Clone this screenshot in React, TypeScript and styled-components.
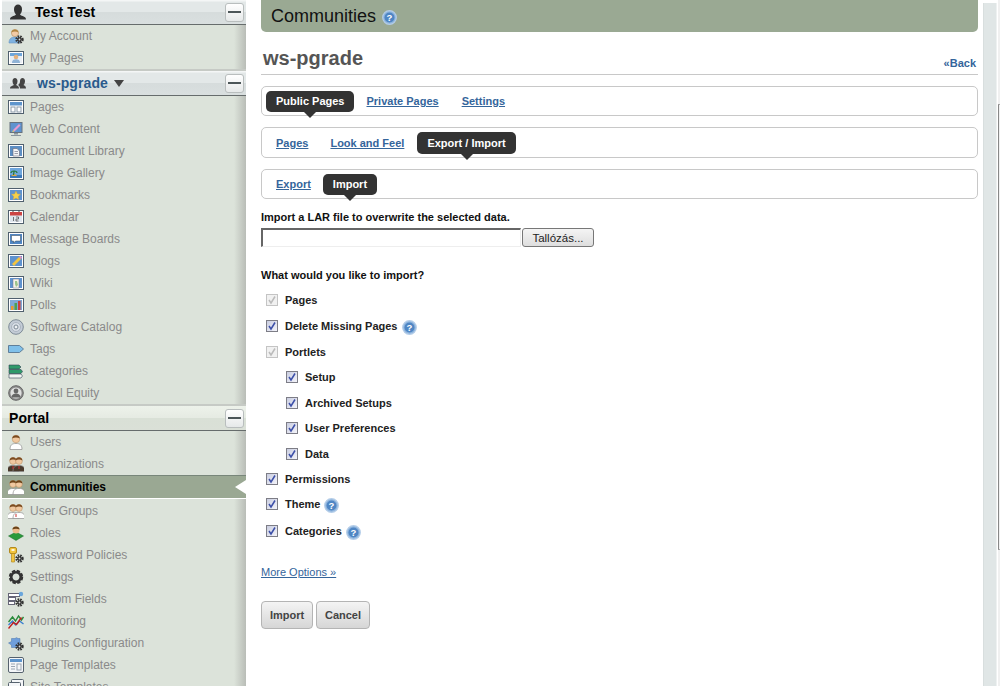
import React from 'react';
import styled, { createGlobalStyle } from 'styled-components';

const Global = createGlobalStyle`
  html, body { margin: 0; padding: 0; background: #fff; height: 686px; overflow: hidden; }
  body { font-family: "Liberation Sans", Arial, sans-serif; }
`;

const Page = styled.div`
  display: flex;
  width: 1000px;
  height: 686px;
  overflow: hidden;
  background: #fff;
`;
const Sidebar = styled.nav`
  width: 244px;
  margin-left: 2px;
  flex: none;
`;
const Section = styled.section`
  border-bottom: 2px solid #c6cac5;
  &:last-child { border-bottom: 0; }
`;
const Header = styled.header<{ $portal?: boolean }>`
  display: flex;
  align-items: center;
  height: 24px;
  border-bottom: 1px solid #666c6c;
  padding-left: 7px;
  background: ${p =>
    p.$portal
      ? 'linear-gradient(#edf2ea 0, #e6ebe3 48%, #d9e0d6 52%, #dae0d7 100%)'
      : 'linear-gradient(#f4f6f6 0, #f4f6f6 1px, #e3e8e8 2px, #e3e8e8 48%, #d6dcdc 52%, #d9dfdf 100%)'};
`;
const HeaderIcon = styled.span`
  display: flex;
  width: 18px;
  height: 16px;
  flex: none;
  margin-right: 8px;
  svg { display: block; }
`;
const HeaderTitle = styled.span<{ $link?: boolean }>`
  font-size: 14px;
  font-weight: bold;
  color: ${p => (p.$link ? '#2a5a8c' : '#000')};
  letter-spacing: 0.1px;
  margin-left: ${p => (p.$link ? '2px' : '0')};
`;
const Caret = styled.span`
  width: 0;
  height: 0;
  margin-left: 6px;
  border-left: 5px solid transparent;
  border-right: 5px solid transparent;
  border-top: 7px solid #444;
`;
const Collapse = styled.span`
  margin-left: auto;
  margin-right: 2px;
  width: 17px;
  height: 17px;
  border: 1px solid #b9bebe;
  border-radius: 3px;
  background: linear-gradient(#fff, #e6e9e9);
  display: flex;
  align-items: center;
  justify-content: center;
  &::before { content: ''; width: 13px; height: 2px; background: #4c5658; }
`;
const List = styled.ul`
  list-style: none;
  margin: 0;
  padding: 0;
  background: linear-gradient(to right, #dce3da 0, #dce3da 232px, #b9bdb7 244px);
`;
const Item = styled.li<{ $active?: boolean }>`
  position: relative;
  display: flex;
  align-items: center;
  height: 22px;
  padding-left: 6px;
  font-size: 12px;
  color: ${p => (p.$active ? '#000' : '#8a8a8a')};
  font-weight: ${p => (p.$active ? 'bold' : 'normal')};
  ${p =>
    p.$active
      ? `
    background: #9aa893;
    border-top: 1px solid #78867a;
    border-bottom: 1px solid #fff;
    margin-bottom: 1px;
    &::after {
      content: '';
      position: absolute;
      right: 0;
      top: 4px;
      border-top: 7px solid transparent;
      border-bottom: 7px solid transparent;
      border-right: 11px solid #fff;
    }
  `
      : ''}
`;
const ItemIcon = styled.span`
  display: flex;
  width: 16px;
  height: 16px;
  flex: none;
  margin-right: 6px;
  svg { display: block; }
`;
const Main = styled.main`
  width: 717px;
  flex: none;
  margin-left: 15px;
`;
const TitleBar = styled.div`
  display: flex;
  align-items: center;
  height: 32px;
  padding: 0 0 0 10px;
  background: #9aa993;
  border-radius: 0 0 5px 5px;
  font-size: 18px;
  color: #111;
  svg { margin-left: 6px; margin-top: 2px; }
`;
const Heading = styled.div`
  display: flex;
  justify-content: space-between;
  align-items: flex-end;
  height: 42px;
  border-bottom: 1px solid #c8c8c8;
  padding: 0 2px;
`;
const Name = styled.h1`
  margin: 0 0 4px;
  font-size: 20px;
  font-weight: bold;
  line-height: 24px;
  color: #555;
`;
const Back = styled.a`
  font-size: 11px;
  font-weight: bold;
  color: #34659b;
  margin-bottom: 4px;
  line-height: 13px;
`;
const TabBox = styled.div<{ $h: number; $top: number }>`
  display: flex;
  align-items: flex-start;
  height: ${p => p.$h}px;
  line-height: ${p => p.$h - 9}px;
  margin-top: ${p => p.$top}px;
  border: 1px solid #c8c8c8;
  border-radius: 5px;
  padding: 4px 0 0 4px;
  box-sizing: border-box;
`;
const Tab = styled.a<{ $left: number }>`
  margin-left: ${p => p.$left}px;
  font-size: 11px;
  font-weight: bold;
  color: #34659b;
  text-decoration: underline;
  white-space: nowrap;
`;
const ActiveTab = styled.span<{ $left: number }>`
  position: relative;
  margin-left: ${p => p.$left}px;
  padding: 0 10px;
  border-radius: 5px;
  background: #333;
  color: #fff;
  font-size: 11px;
  font-weight: bold;
  white-space: nowrap;
  &::after {
    content: '';
    position: absolute;
    left: 50%;
    margin-left: -6px;
    top: 100%;
    border-left: 6px solid transparent;
    border-right: 6px solid transparent;
    border-top: 6px solid #333;
  }
`;
const Caption = styled.div<{ $top: number }>`
  margin-top: ${p => p.$top}px;
  font-size: 11px;
  font-weight: bold;
  line-height: 13px;
  color: #111;
`;
const FileRow = styled.div`
  display: flex;
  margin-top: 4px;
  height: 19px;
`;
const FileField = styled.div`
  width: 260px;
  height: 19px;
  box-sizing: border-box;
  border-top: 2px solid #666;
  border-left: 2px solid #666;
  border-right: 1px solid #eee;
  border-bottom: 1px solid #eee;
`;
const Browse = styled.button`
  width: 72px;
  height: 19px;
  margin-left: 1px;
  padding: 0;
  border: 1px solid #777;
  border-radius: 3px;
  background: linear-gradient(#f4f4f4, #dedede);
  font: 11.5px "Liberation Sans", Arial, sans-serif;
  color: #222;
`;
const Options = styled.div`
  margin-top: 11px;
`;
const Row = styled.div<{ $gap: number; $nested?: boolean }>`
  display: flex;
  align-items: center;
  height: 14px;
  margin-bottom: ${p => p.$gap}px;
  padding-left: ${p => (p.$nested ? '25px' : '5px')};
  font-size: 11px;
  font-weight: bold;
  color: #222;
  > svg { margin-left: 4px; margin-top: 3px; flex: none; }
`;
const Check = styled.span<{ $off?: boolean }>`
  display: flex;
  width: 10px;
  height: 10px;
  flex: none;
  margin-right: 7px;
  border: 1px solid ${p => (p.$off ? '#c4c4c4' : '#7d7d86')};
  background: ${p => (p.$off ? '#f1f1f1' : 'linear-gradient(135deg, #c9cde0, #f4f4fa)')};
`;
const More = styled.a`
  display: block;
  margin-top: 28px;
  font-size: 11px;
  line-height: 13px;
  color: #34659b;
  text-decoration: underline;
`;
const Actions = styled.div`
  display: flex;
  gap: 3px;
  margin-top: 22px;
`;
const Action = styled.button<{ $w: number }>`
  width: ${p => p.$w}px;
  height: 28px;
  padding: 0;
  border: 1px solid #b4b4b4;
  border-radius: 4px;
  background: linear-gradient(#f4f4f4, #d6d6d6);
  font: bold 11px "Liberation Sans", Arial, sans-serif;
  color: #444;
`;
const Track = styled.div`
  width: 14px;
  flex: none;
  margin: 3px 0 0 5px;
  height: 683px;
  background: #e0e6e6;
  border-left: 1px solid #d8dede;
  border-right: 1px solid #eef1f1;
  box-sizing: border-box;
`;
const Edge = styled.div`
  width: 2px;
  flex: none;
  margin-left: 1px;
  height: 686px;
  padding-top: 104px;
  box-sizing: border-box;
  background: #f0f0f0;
`;
const Thumb = styled.div`
  height: 446px;
  box-sizing: border-box;
  border-left: 1px solid #888;
  border-top: 1px solid #aaa;
  border-bottom: 1px solid #aaa;
`;

const Gear = ({ x, y }: { x: number; y: number }) => (
  <g>
    <circle cx={x} cy={y} r={3} fill="none" stroke="#333" strokeWidth={2.4} strokeDasharray="1.5 0.9" />
    <circle cx={x} cy={y} r={2.2} fill="#333" />
    <circle cx={x} cy={y} r={0.9} fill="#ddd" />
  </g>
);
const Person = ({ x = 8, y = 0, hair = '#8a5a2a', body = '#fff', r = 3.8 }: { x?: number; y?: number; hair?: string; body?: string; r?: number }) => (
  <g>
    <path d={`M${x - 6} ${y + 15.500}c0-4.500 2-6 6-6s6 1.500 6 6z`} fill={body} stroke="#8e8e8e" strokeWidth={0.7} />
    <circle cx={x} cy={y + 5} r={r} fill="#f0c8a0" stroke="#a87a4a" strokeWidth={0.4} />
    <path d={`M${x - r} ${y + 4.500}c0-4.500 ${2 * r} -4.500 ${2 * r} 0c-2-1.500 -${2 * r - 2} -1.500 -${2 * r} 0z`} fill={hair} />
  </g>
);
const Frame = ({ children, top = '#9db8d8' }: { children?: React.ReactNode; top?: string }) => (
  <g>
    <rect x={0.5} y={1.5} width={15} height={13} fill="#fff" stroke="#50606e" />
    <rect x={2} y={3} width={12} height={10} fill={top} />
    {children}
  </g>
);

const icons: Record<string, React.ReactNode> = {
  account: (
    <>
      <path d="M1 15c0-4 2-6 6-6s5 1 5 2v4z" fill="#7fb2e0" stroke="#6a94c0" strokeWidth={0.6} />
      <circle cx={7} cy={5} r={3.6} fill="#f2cba6" stroke="#a8804f" strokeWidth={0.5} />
      <path d="M3.4 4.500c0-4 7-4 7 0c-2-1.200-5-1.200-7 0z" fill="#b08540" />
      <Gear x={11.5} y={11.5} />
    </>
  ),
  mypages: (
    <Frame top="#6fa6da">
      <rect x={2} y={6} width={12} height={7} fill="#e8eef4" />
      <circle cx={8} cy={7} r={2.3} fill="#e5b27f" />
      <path d="M4 13c0-3 1.500-3.800 4-3.800s4 .8 4 3.800z" fill="#8fb3d6" />
    </Frame>
  ),
  pages: (
    <Frame top="#fff">
      <rect x={2} y={3} width={12} height={3.5} fill="#5d94cc" />
      <rect x={3} y={8} width={4} height={5} fill="none" stroke="#8a9aa8" />
      <rect x={9} y={8} width={4} height={5} fill="none" stroke="#8a9aa8" />
    </Frame>
  ),
  web: (
    <>
      <rect x={2} y={1.5} width={12} height={10} fill="#5f93cf" stroke="#66727e" />
      <path d="M5 9l6-6 1.500 1.500-6 6z" fill="#e89ad0" />
      <path d="M5 9l-.8 2 2.200-.6z" fill="#f4d060" />
      <path d="M6 12h4v1.500H6zM3 14h10v1H3z" fill="#8a949c" />
    </>
  ),
  doc: (
    <Frame top="#5d8fc4">
      <path d="M5 5.500h4l2.500 2.500v5H5z" fill="#f4f6f8" stroke="#667" strokeWidth={0.6} />
      <path d="M6.500 8.500h3.500M6.500 10.500h3.500" stroke="#778" strokeWidth={0.7} />
    </Frame>
  ),
  gallery: (
    <Frame top="#6ea6dc">
      <rect x={2} y={10} width={12} height={3} fill="#3b78b8" />
      <path d="M3 11c2-2.500 5-2.500 6 0z" fill="#d9a548" />
      <path d="M5.500 10l.6-4M6 6c-2 0-3 1-3 2M6 6c2 0 3 1 3 2" stroke="#2a7a3a" strokeWidth={1.2} fill="none" />
    </Frame>
  ),
  bookmarks: (
    <Frame top="#5f93cf">
      <path d="M8 4l1.400 2.900 3.100.4-2.300 2.200.6 3.100L8 11.100l-2.800 1.500.6-3.100-2.300-2.200 3.100-.4z" fill="#f6d04a" stroke="#d9a92a" strokeWidth={0.4} />
    </Frame>
  ),
  calendar: (
    <Frame top="#dfe6ee">
      <rect x={2} y={3} width={12} height={3.5} fill="#c44" />
      <path d="M5 3V1.500M11 3V1.500" stroke="#444" />
      <path d="M5.500 8v4M8 8h2.500v2H8v2h2.500" stroke="#555" strokeWidth={0.8} fill="none" />
    </Frame>
  ),
  message: (
    <Frame top="#4f86c4">
      <path d="M3.500 4.500h9v5.500h-5l-2 2v-2h-2z" fill="#fff" stroke="#345" strokeWidth={0.5} />
    </Frame>
  ),
  blogs: (
    <Frame top="#5f93cf">
      <path d="M4 11l7-7 2 2-7 7z" fill="#f2c440" />
      <path d="M11 4l1.200-1.200 2 2L13 6z" fill="#e090c0" />
    </Frame>
  ),
  wiki: (
    <Frame top="#5f93cf">
      <path d="M5 4h6v9H5z" fill="#f5f2ea" stroke="#778" strokeWidth={0.5} />
      <path d="M7 6h2l1 4-2 2-1-3z" fill="#9cc48c" />
    </Frame>
  ),
  polls: (
    <Frame top="#7fa8d4">
      <rect x={3} y={9} width={2.5} height={4} fill="#e89a2c" />
      <rect x={6.5} y={6} width={2.5} height={7} fill="#4fa04f" />
      <rect x={10} y={4} width={2.5} height={9} fill="#c84040" />
    </Frame>
  ),
  catalog: (
    <>
      <circle cx={8} cy={8} r={7.3} fill="#c3ccd6" stroke="#7d8a96" />
      <circle cx={8} cy={8} r={4.5} fill="#d8dee6" stroke="#aab4c0" />
      <circle cx={8} cy={8} r={2} fill="#eef1f4" stroke="#7d8a96" />
    </>
  ),
  tags: (
    <path d="M.5 4.500h11l4 3.500-4 3.500H.5z" fill="#7fc0ea" stroke="#5f7f9a" />
  ),
  categories: (
    <>
      <path d="M1 11h12l1.500 2-1.500 2H1z" fill="#f4f6f4" stroke="#345" strokeWidth={0.6} />
      <path d="M1 6.500h12l1.500 2-1.500 2H1z" fill="#2f9a6a" stroke="#345" strokeWidth={0.6} />
      <path d="M1 2h10l2 2-2 2H1z" fill="#2f9a6a" stroke="#345" strokeWidth={0.6} />
    </>
  ),
  social: (
    <>
      <circle cx={8} cy={8} r={7.3} fill="#8a8a8a" stroke="#666" />
      <circle cx={8} cy={8} r={5.6} fill="#dfe0df" />
      <circle cx={8} cy={6} r={2.4} fill="#666" />
      <path d="M3.600 12.500c0-3 2-4 4.400-4s4.400 1 4.400 4z" fill="#666" />
    </>
  ),
  users: <Person hair="#7a4a1f" />,
  orgs: (
    <>
      <Person x={5} hair="#7a4a1f" body="#4a3a2c" r={3.4} />
      <Person x={11} hair="#7a4a1f" body="#4a3a2c" r={3.4} />
      <path d="M5 10v3M11 10v3" stroke="#c33" />
    </>
  ),
  communities: (
    <>
      <Person x={5} hair="#6b4218" r={3.4} />
      <Person x={11} hair="#6b4218" r={3.4} />
    </>
  ),
  groups: (
    <>
      <Person x={5} hair="#7a4a1f" r={3.4} />
      <Person x={11} hair="#7a4a1f" r={3.4} />
      <path d="M8 11v3" stroke="#c33" />
    </>
  ),
  roles: (
    <>
      <path d="M.5 11l7.500-4 7.500 4-7.500 4.500z" fill="#2b9a3a" stroke="#1a6a28" strokeWidth={0.5} />
      <circle cx={8} cy={5} r={3.5} fill="#ecbc8c" />
      <path d="M4.400 4.600c0-4 7.200-4 7.200 0c-2-1.200-5.200-1.200-7.200 0z" fill="#6b4218" />
    </>
  ),
  key: (
    <>
      <rect x={1.5} y={0.5} width={7} height={6} rx={1.5} fill="#f2c53f" stroke="#b38a1f" />
      <rect x={3.5} y={2.2} width={3} height={1.6} fill="#fff" />
      <path d="M3.500 6.500h3V15h-3z" fill="#f2c53f" stroke="#b38a1f" strokeWidth={0.7} />
      <Gear x={11.5} y={11.5} />
    </>
  ),
  settings: (
    <g transform="translate(8 8)">
      <circle r={5.6} fill="none" stroke="#333" strokeWidth={3.2} strokeDasharray="3 1.4" />
      <circle r={4.8} fill="none" stroke="#333" strokeWidth={2.6} />
    </g>
  ),
  fields: (
    <>
      <rect x={0.5} y={2.5} width={11} height={3} fill="#fff" stroke="#667" />
      <rect x={0.5} y={6.5} width={7} height={3} fill="#fff" stroke="#667" />
      <rect x={0.5} y={10.5} width={6} height={3} fill="#fff" stroke="#667" />
      <circle cx={13} cy={3} r={2.2} fill="#6aa6dc" />
      <Gear x={11.5} y={11.5} />
    </>
  ),
  monitoring: (
    <>
      <path d="M.5 9l4-5 3 4 3-5 3 4 2-3" fill="none" stroke="#2a8a3a" strokeWidth={1.4} />
      <path d="M.5 12l4-4 3 4 4-4 4 3" fill="none" stroke="#3a80d0" strokeWidth={1.4} />
      <path d="M.5 15.500l5-6 3 2 5-7" fill="none" stroke="#c02020" strokeWidth={1.4} />
    </>
  ),
  plugins: (
    <>
      <path d="M.5 8l3-1.500V3.500h3.500a2 2 0 0 1 3 0H12v9H3.500V10z" fill="#6f9fdc" stroke="#4a74a8" strokeWidth={0.5} />
      <Gear x={11.5} y={11.5} />
    </>
  ),
  ptemplates: (
    <>
      <rect x={0.5} y={0.5} width={15} height={15} rx={1.5} fill="#f4f6f8" stroke="#56626e" />
      <rect x={2} y={2} width={12} height={3} fill="#5d94cc" />
      <path d="M3 7h4M3 9.500h4M3 12h4" stroke="#9aa6b2" />
      <rect x={9} y={7} width={4} height={6} fill="none" stroke="#9aa6b2" />
    </>
  ),
  stemplates: (
    <>
      <rect x={3.5} y={0.5} width={12} height={10} rx={1} fill="#f4f6f8" stroke="#56626e" />
      <rect x={0.5} y={3.5} width={12} height={11} rx={1} fill="#f4f6f8" stroke="#56626e" />
    </>
  ),
};

const Icon = ({ name }: { name: string }) => (
  <ItemIcon>
    <svg width={16} height={16} viewBox="0 0 16 16">
      {icons[name]}
    </svg>
  </ItemIcon>
);

const Help = () => (
  <svg width={15} height={15} viewBox="0 0 15 15">
    <circle cx={7.5} cy={7.5} r={6.8} fill="#8fb5de" stroke="#b4cde8" strokeWidth={1.2} />
    <circle cx={7.5} cy={7.5} r={5} fill="#4f86c4" />
    <text x={7.5} y={11} textAnchor="middle" fontSize={9.5} fontWeight="bold" fill="#fff" fontFamily="Liberation Sans, sans-serif">?</text>
  </svg>
);

const Checkbox = ({ off }: { off?: boolean }) => (
  <Check $off={off}>
    <svg width={10} height={10} viewBox="0 0 10 10">
      <path d="M2 5l2 3 4-6.500" fill="none" stroke={off ? '#bbb' : '#3c4fa8'} strokeWidth={1.5} />
    </svg>
  </Check>
);

type Entry = [string, string, boolean?];
const personal: Entry[] = [['account', 'My Account'], ['mypages', 'My Pages']];
const community: Entry[] = [
  ['pages', 'Pages'], ['web', 'Web Content'], ['doc', 'Document Library'], ['gallery', 'Image Gallery'],
  ['bookmarks', 'Bookmarks'], ['calendar', 'Calendar'], ['message', 'Message Boards'], ['blogs', 'Blogs'],
  ['wiki', 'Wiki'], ['polls', 'Polls'], ['catalog', 'Software Catalog'], ['tags', 'Tags'],
  ['categories', 'Categories'], ['social', 'Social Equity'],
];
const portal: Entry[] = [
  ['users', 'Users'], ['orgs', 'Organizations'], ['communities', 'Communities', true], ['groups', 'User Groups'],
  ['roles', 'Roles'], ['key', 'Password Policies'], ['settings', 'Settings'], ['fields', 'Custom Fields'],
  ['monitoring', 'Monitoring'], ['plugins', 'Plugins Configuration'], ['ptemplates', 'Page Templates'], ['stemplates', 'Site Templates'],
];

const Entries = ({ items }: { items: Entry[] }) => (
  <List>
    {items.map(([icon, label, active]) => (
      <Item key={label} $active={active}>
        <Icon name={icon} />
        {label}
      </Item>
    ))}
  </List>
);

const rows: { label: string; gap: number; off?: boolean; nested?: boolean; help?: boolean }[] = [
  { label: 'Pages', gap: 12, off: true },
  { label: 'Delete Missing Pages', gap: 12, help: true },
  { label: 'Portlets', gap: 11, off: true },
  { label: 'Setup', gap: 12, nested: true },
  { label: 'Archived Setups', gap: 11, nested: true },
  { label: 'User Preferences', gap: 12, nested: true },
  { label: 'Data', gap: 11, nested: true },
  { label: 'Permissions', gap: 11 },
  { label: 'Theme', gap: 13, help: true },
  { label: 'Categories', gap: 0, help: true },
];

export default function App() {
  return (
    <Page>
      <Global />
      <Sidebar>
        <Section>
          <Header>
            <HeaderIcon>
              <svg width={18} height={16} viewBox="0 0 18 16">
                <path d="M1 15.500c0-3.500 4-3 6-5-1.500-1.500-2-3.500-2-5.500 0-3 2-4.500 4-4.500s4 1.500 4 4.500c0 2-.5 4-2 5.500 2 2 6 1.500 6 5z" fill="#333" />
              </svg>
            </HeaderIcon>
            <HeaderTitle>Test Test</HeaderTitle>
            <Collapse />
          </Header>
          <Entries items={personal} />
        </Section>
        <Section>
          <Header>
            <HeaderIcon>
              <svg width={18} height={16} viewBox="0 0 18 16">
                <path d="M1 13.500c0-2.500 2.500-2.500 4-3.500-1-1-1.500-2.500-1.500-4 0-2 1.300-3 2.500-3s2.500 1 2.500 3c0 1.500-.5 3-1.500 4 1.500 1 3 1 3 3.500zM11 13.500c0-2-1-3-2-3.500.8-.6 1.200-1 1.600-1.800.4-1 .4-1.200.4-2.200 0-2 1.300-3 2.500-3s2.500 1 2.500 3c0 1.500-.5 3-1.500 4 1 .7 2.500 1 2.500 3.500z" fill="#444" />
              </svg>
            </HeaderIcon>
            <HeaderTitle $link>ws-pgrade</HeaderTitle>
            <Caret />
            <Collapse />
          </Header>
          <Entries items={community} />
        </Section>
        <Section>
          <Header $portal>
            <HeaderTitle>Portal</HeaderTitle>
            <Collapse />
          </Header>
          <Entries items={portal} />
        </Section>
      </Sidebar>
      <Main>
        <TitleBar>
          Communities
          <Help />
        </TitleBar>
        <Heading>
          <Name>ws-pgrade</Name>
          <Back>«Back</Back>
        </Heading>
        <TabBox $h={30} $top={11}>
          <ActiveTab $left={0}>Public Pages</ActiveTab>
          <Tab $left={12}>Private Pages</Tab>
          <Tab $left={23}>Settings</Tab>
        </TabBox>
        <TabBox $h={31} $top={11}>
          <Tab $left={10}>Pages</Tab>
          <Tab $left={22}>Look and Feel</Tab>
          <ActiveTab $left={13}>Export / Import</ActiveTab>
        </TabBox>
        <TabBox $h={30} $top={11}>
          <Tab $left={10}>Export</Tab>
          <ActiveTab $left={12}>Import</ActiveTab>
        </TabBox>
        <Caption $top={12}>Import a LAR file to overwrite the selected data.</Caption>
        <FileRow>
          <FileField />
          <Browse>Tallózás...</Browse>
        </FileRow>
        <Caption $top={22}>What would you like to import?</Caption>
        <Options>
          {rows.map(r => (
            <Row key={r.label} $gap={r.gap} $nested={r.nested}>
              <Checkbox off={r.off} />
              {r.label}
              {r.help && <Help />}
            </Row>
          ))}
        </Options>
        <More>More Options »</More>
        <Actions>
          <Action $w={52}>Import</Action>
          <Action $w={54}>Cancel</Action>
        </Actions>
      </Main>
      <Track />
      <Edge>
        <Thumb />
      </Edge>
    </Page>
  );
}
